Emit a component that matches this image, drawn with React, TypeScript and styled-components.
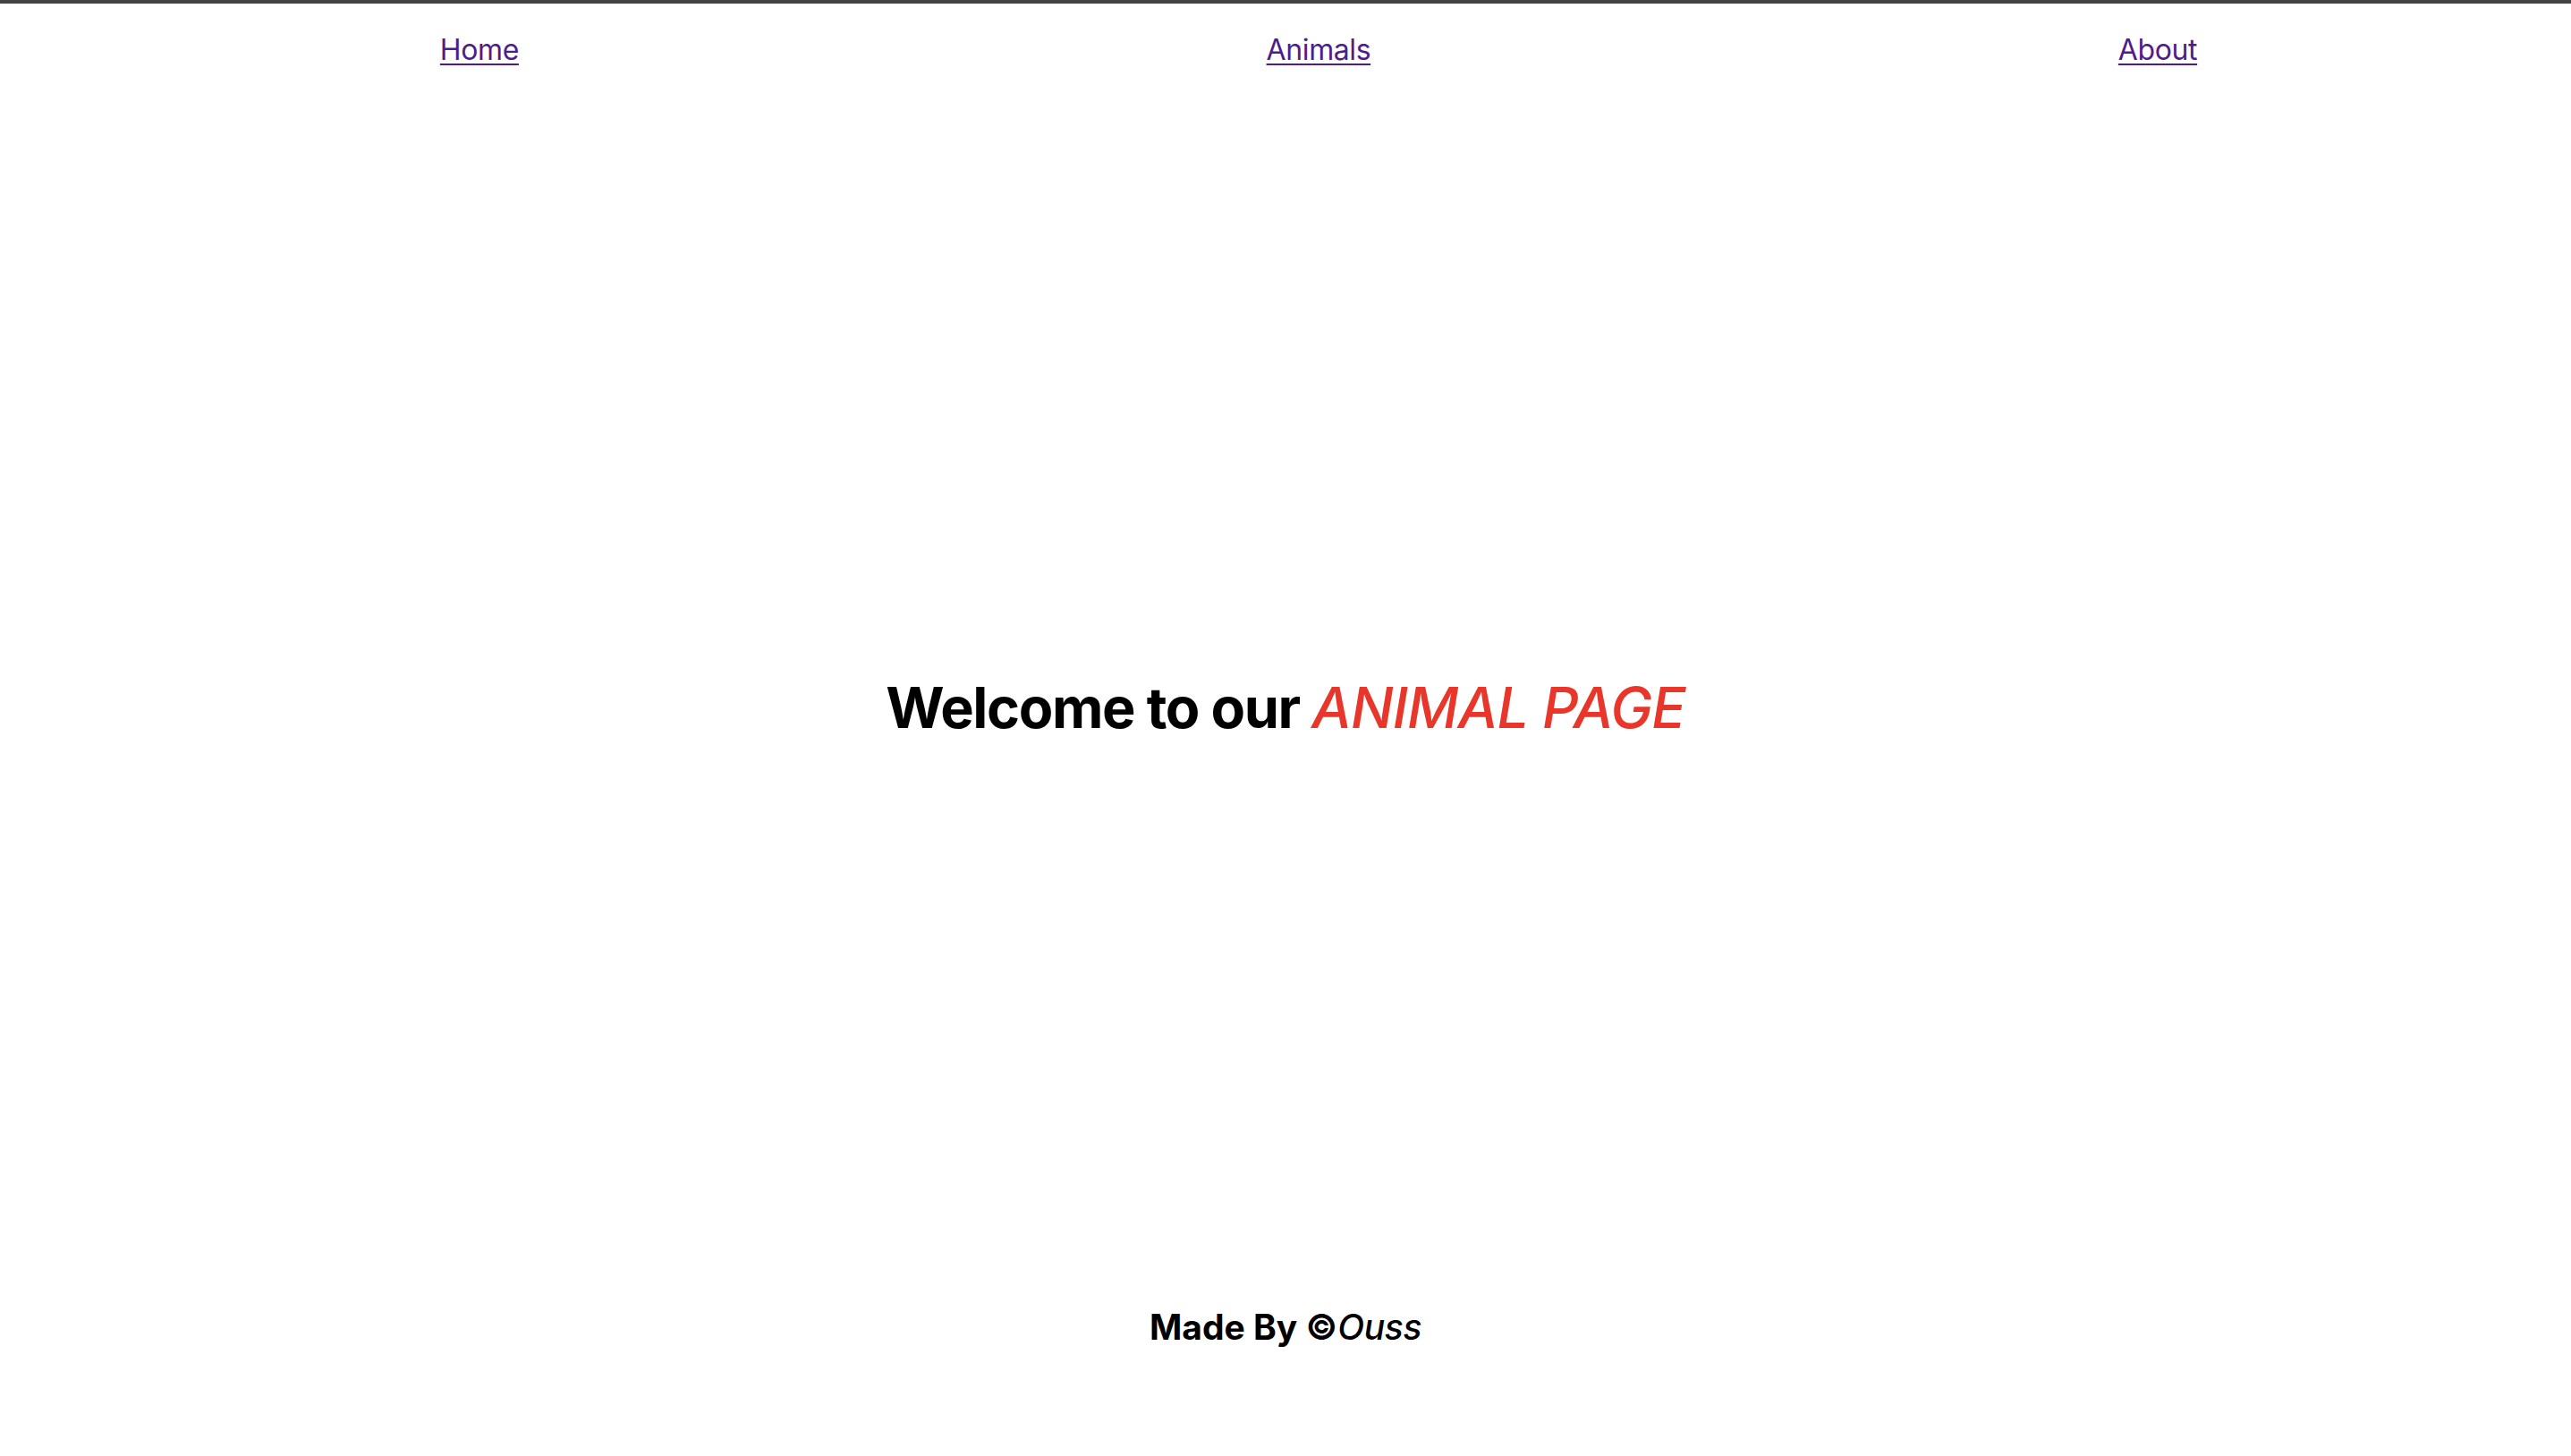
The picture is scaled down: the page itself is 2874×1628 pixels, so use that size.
import React from "react";
import styled, { createGlobalStyle } from "styled-components";

const GlobalStyle = createGlobalStyle`
  html, body {
    margin: 0;
    padding: 0;
    background: #ffffff;
  }
  body {
    font-family: Inter, "Noto Sans", "Liberation Sans", sans-serif;
    color: #000;
  }
`;

const Page = styled.div`
  min-height: 1628px;
  box-sizing: border-box;
  border-top: 4px solid #434343;
  display: flex;
  flex-direction: column;
`;

const NavList = styled.ul`
  list-style: none;
  margin: 32px 0 32px;
  padding: 0 0 0 74px;
  display: flex;
  justify-content: space-around;
`;

const NavItem = styled.li`
  font-size: 32px;
  line-height: normal;
  letter-spacing: -0.4px;
`;

const NavLink = styled.a`
  color: #4f1d8a;
  text-decoration: underline;
  text-decoration-thickness: 2px;
  text-underline-offset: 4px;
`;

const Main = styled.main`
  flex: 1;
  display: flex;
  align-items: center;
  justify-content: center;
  padding-top: 14px;
`;

const Title = styled.h1`
  margin: 0;
  font-size: 63px;
  font-weight: 700;
  line-height: normal;
  letter-spacing: -1.4px;
`;

const Accent = styled.em`
  color: #e8372a;
  font-style: italic;
  font-weight: 500;
  letter-spacing: -0.9px;
`;

const Footer = styled.footer`
  display: flex;
  justify-content: center;
  padding-bottom: 121px;
`;

const Credit = styled.h3`
  margin: 0;
  font-size: 39px;
  font-weight: 700;
  line-height: normal;
`;

const Author = styled.em`
  font-style: italic;
  font-weight: 500;
  letter-spacing: -0.4px;
`;

export default function App() {
  return (
    <>
      <GlobalStyle />
      <Page>
        <nav>
          <NavList>
            <NavItem>
              <NavLink href="#home">Home</NavLink>
            </NavItem>
            <NavItem>
              <NavLink href="#animals">Animals</NavLink>
            </NavItem>
            <NavItem>
              <NavLink href="#about">About</NavLink>
            </NavItem>
          </NavList>
        </nav>
        <Main>
          <Title>
            Welcome to our <Accent>ANIMAL PAGE</Accent>
          </Title>
        </Main>
        <Footer>
          <Credit>
            Made By ©<Author>Ouss</Author>
          </Credit>
        </Footer>
      </Page>
    </>
  );
}
